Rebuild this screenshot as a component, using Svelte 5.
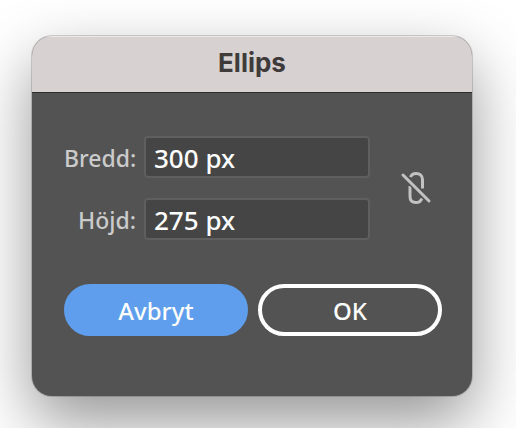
<script lang="ts">
	let width = '300 px';
	let height = '275 px';
	let linked = false;

	function toggleLink() {
		linked = !linked;
	}
</script>

<main>
	<div class="dialog" role="dialog" aria-labelledby="dialog-title">
		<header>
			<h1 id="dialog-title">Ellips</h1>
		</header>

		<form on:submit|preventDefault>
			<div class="size">
				<div class="fields">
					<label for="width">Bredd:</label>
					<input id="width" type="text" bind:value={width} />
					<label for="height">Höjd:</label>
					<input id="height" type="text" bind:value={height} />
				</div>

				<button
					type="button"
					class="link"
					aria-label="Begränsa proportioner"
					aria-pressed={linked}
					on:click={toggleLink}
				>
					<svg viewBox="0 0 32 34" width="32" height="34" fill="none" stroke="currentColor">
						<path d="M10.6 6.2C11.3 3.600 13.200 2.500 16 2.500c4 0 6.500 2.300 6.500 6v9" stroke-width="3" />
						<path d="M10 15v10.500c0 4 2.200 6 6 6 2.800 0 4.900-1.100 5.800-4.200" stroke-width="3" />
						{#if !linked}
							<path d="M3 4l26 26" stroke="#535353" stroke-width="6" />
							<path d="M3 4l26 26" stroke-width="3" stroke-linecap="round" />
						{/if}
					</svg>
				</button>
			</div>

			<div class="actions">
				<button type="button" class="btn primary">Avbryt</button>
				<button type="submit" class="btn">OK</button>
			</div>
		</form>
	</div>
</main>

<style>
	:global(body) {
		margin: 0;
		background-color: #fff;
	}

	main {
		padding: 36px 44px 32px 32px;
		font-family: 'Noto Sans', 'Open Sans', sans-serif;
	}

	.dialog {
		border-radius: 20px;
		overflow: hidden;
		background-color: #535353;
		box-shadow:
			0 0 0 1px rgba(0, 0, 0, 0.16),
			0 26px 64px rgba(0, 0, 0, 0.42);
	}

	header {
		display: flex;
		justify-content: center;
		align-items: center;
		height: 56px;
		border-bottom: 1px solid #2b2b2b;
		background-color: #d7d1d1;
		box-shadow: inset 0 1px 0 #ece8e8;
	}

	h1 {
		margin: 0;
		padding-bottom: 2px;
		color: #3f3b3b;
		font-family: Inter, sans-serif;
		font-size: 26px;
		font-weight: 700;
		line-height: 32px;
	}

	form {
		padding: 43px 30px 60px 32px;
	}

	.size {
		display: flex;
		align-items: center;
		gap: 30px;
	}

	.fields {
		flex: 1;
		display: grid;
		grid-template-columns: 72px 1fr;
		align-items: center;
		gap: 20px 8px;
	}

	label {
		padding-top: 2px;
		color: #cbcbcb;
		font-size: 23px;
		font-weight: 500;
		line-height: 32px;
		text-align: right;
		white-space: nowrap;
	}

	input {
		box-sizing: border-box;
		width: 100%;
		min-width: 0;
		height: 42px;
		padding: 2px 8px 0;
		border: 2px solid #5f5f5f;
		border-radius: 4px;
		background-color: #454545;
		color: #fff;
		font-family: inherit;
		font-size: 26px;
		font-weight: 500;
	}

	.link {
		padding: 0;
		margin-right: 10px;
		border: none;
		background: none;
		color: #c2c2c2;
	}

	.link svg {
		display: block;
	}

	.actions {
		display: flex;
		gap: 10px;
		margin-top: 44px;
	}

	.btn {
		flex: 1;
		height: 52px;
		padding: 0;
		border: 4px solid #fff;
		border-radius: 26px;
		background-color: transparent;
		color: #fff;
		font-family: inherit;
		font-size: 24px;
		font-weight: 500;
	}

	.primary {
		border-color: #5e9eec;
		background-color: #5e9eec;
	}
</style>
